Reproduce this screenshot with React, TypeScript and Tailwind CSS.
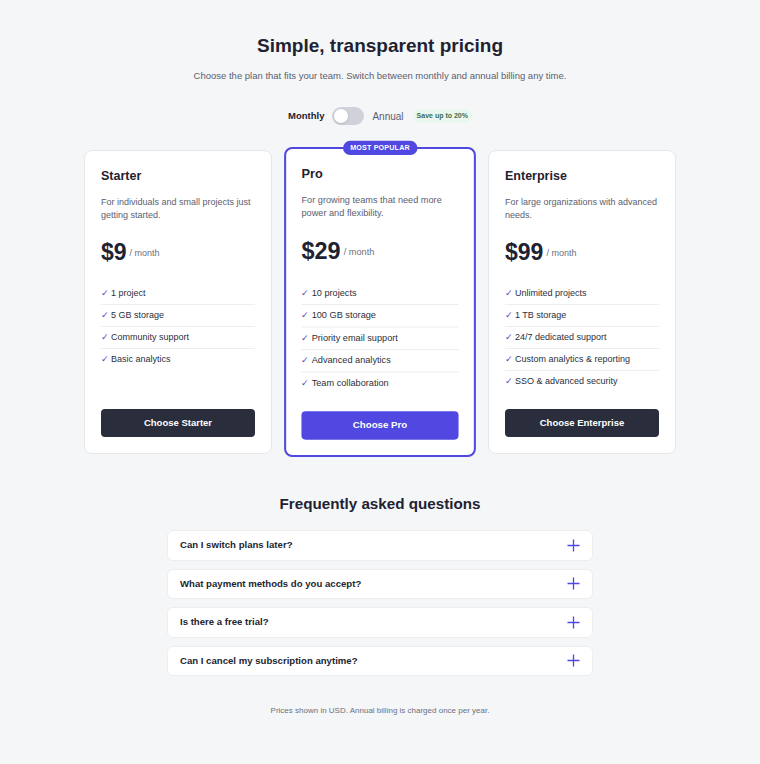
import React, { useState } from 'react';

interface Plan {
  name: string;
  blurb: string;
  price: number;
  features: string[];
  featured?: boolean;
}

const plans: Plan[] = [
  {
    name: 'Starter',
    blurb: 'For individuals and small projects just getting started.',
    price: 9,
    features: ['1 project', '5 GB storage', 'Community support', 'Basic analytics'],
  },
  {
    name: 'Pro',
    blurb: 'For growing teams that need more power and flexibility.',
    price: 29,
    features: ['10 projects', '100 GB storage', 'Priority email support', 'Advanced analytics', 'Team collaboration'],
    featured: true,
  },
  {
    name: 'Enterprise',
    blurb: 'For large organizations with advanced needs.',
    price: 99,
    features: [
      'Unlimited projects',
      '1 TB storage',
      '24/7 dedicated support',
      'Custom analytics & reporting',
      'SSO & advanced security',
    ],
  },
];

const faqs = [
  'Can I switch plans later?',
  'What payment methods do you accept?',
  'Is there a free trial?',
  'Can I cancel my subscription anytime?',
];

const PlusIcon = () => (
  <svg width="13" height="13" viewBox="0 0 13 13" fill="none" stroke="#4f46e5" strokeWidth="1.3">
    <path d="M6.5 0.5v12M0.5 6.5h12" />
  </svg>
);

const PlanCard: React.FC<{ plan: Plan }> = ({ plan }) => (
  <div
    className={`relative flex flex-col rounded-lg bg-white ${
      plan.featured
        ? 'scale-[1.02] border-2 border-[#5048e0] px-[15px] pt-4 pb-[15px]'
        : 'border border-[#e5e7eb] px-4 pt-[17px] pb-4'
    }`}
  >
    {plan.featured && (
      <span className="absolute -top-[8px] left-1/2 -translate-x-1/2 rounded-full bg-[#5048e0] px-[7px] py-[2px] text-[7px] font-bold leading-[10px] tracking-wide text-white">
        MOST POPULAR
      </span>
    )}
    <h3 className="text-[12.5px] font-bold leading-4 text-[#1f2230]">{plan.name}</h3>
    <p className="mt-3 text-[9px] leading-[13px] text-[#5b6070]">{plan.blurb}</p>
    <div className="mt-4 flex h-7 items-center gap-[3px]">
      <span className="text-[23px] font-bold leading-7 text-[#1f2230]">${plan.price}</span>
      <span className="mt-[3px] text-[9px] text-[#6b7080]">/ month</span>
    </div>
    <ul className="mt-[17px] mb-[17px]">
      {plan.features.map((f, i) => (
        <li
          key={f}
          className={`flex items-center gap-[3px] py-[4px] text-[9px] leading-[13px] text-[#2b2f3c] ${
            i < plan.features.length - 1 ? 'border-b border-[#eceef1]' : ''
          }`}
        >
          <span className="w-[7px] text-[8.5px] text-[#4a44c9]">✓</span>
          {f}
        </li>
      ))}
    </ul>
    <button
      className={`mt-auto h-7 rounded-[4px] text-[9.5px] font-bold text-white ${
        plan.featured ? 'bg-[#5048e0]' : 'bg-[#2a2d3b]'
      }`}
    >
      Choose {plan.name}
    </button>
  </div>
);

export default function App() {
  const [annual, setAnnual] = useState(false);

  return (
    <div className="min-h-[764px] bg-[#f5f6f8] pt-[34px] pb-10 font-['Liberation_Sans',Arial,sans-serif] text-[#1f2230]">
      <div className="mx-auto w-[592px]">
        <h1 className="text-center text-[19px] font-bold leading-6">Simple, transparent pricing</h1>
        <p className="mt-[11px] text-center text-[9.5px] leading-[14px] text-[#5b6070]">
          Choose the plan that fits your team. Switch between monthly and annual billing any time.
        </p>

        <div className="mt-6 flex items-center justify-center gap-2">
          <span className="text-[9.5px] font-bold">Monthly</span>
          <button
            onClick={() => setAnnual(a => !a)}
            className={`flex h-[18px] w-8 items-center rounded-full p-[2px] ${annual ? 'bg-indigo-600 justify-end' : 'bg-[#cfd2d8] justify-start'}`}
          >
            <span className="h-[14px] w-[14px] rounded-full bg-white shadow" />
          </button>
          <span className="text-[10px] text-[#5b6070]">Annual</span>
          <span className="ml-[1px] rounded-full bg-[#eaf7ee] px-[4px] py-[3px] text-[7px] font-bold leading-[8px] text-[#3f6b4c]">
            Save up to 20%
          </span>
        </div>

        <div className="mt-[25px] grid grid-cols-3 gap-[14px]">
          {plans.map(p => (
            <PlanCard key={p.name} plan={p} />
          ))}
        </div>
      </div>

      <div className="mx-auto mt-10 w-[426px]">
        <h2 className="text-center text-[15.2px] font-bold leading-5">Frequently asked questions</h2>
        <div className="mt-4 flex flex-col gap-2">
          {faqs.map(q => (
            <div
              key={q}
              className="flex h-[30.5px] items-center justify-between rounded-md border border-[#eceef1] bg-white pl-3 pr-3"
            >
              <span className="text-[9.6px] font-bold text-[#22252f]">{q}</span>
              <PlusIcon />
            </div>
          ))}
        </div>
      </div>

      <p className="mt-[29px] text-center text-[8px] leading-3 text-[#6b7080]">
        Prices shown in USD. Annual billing is charged once per year.
      </p>
    </div>
  );
}
